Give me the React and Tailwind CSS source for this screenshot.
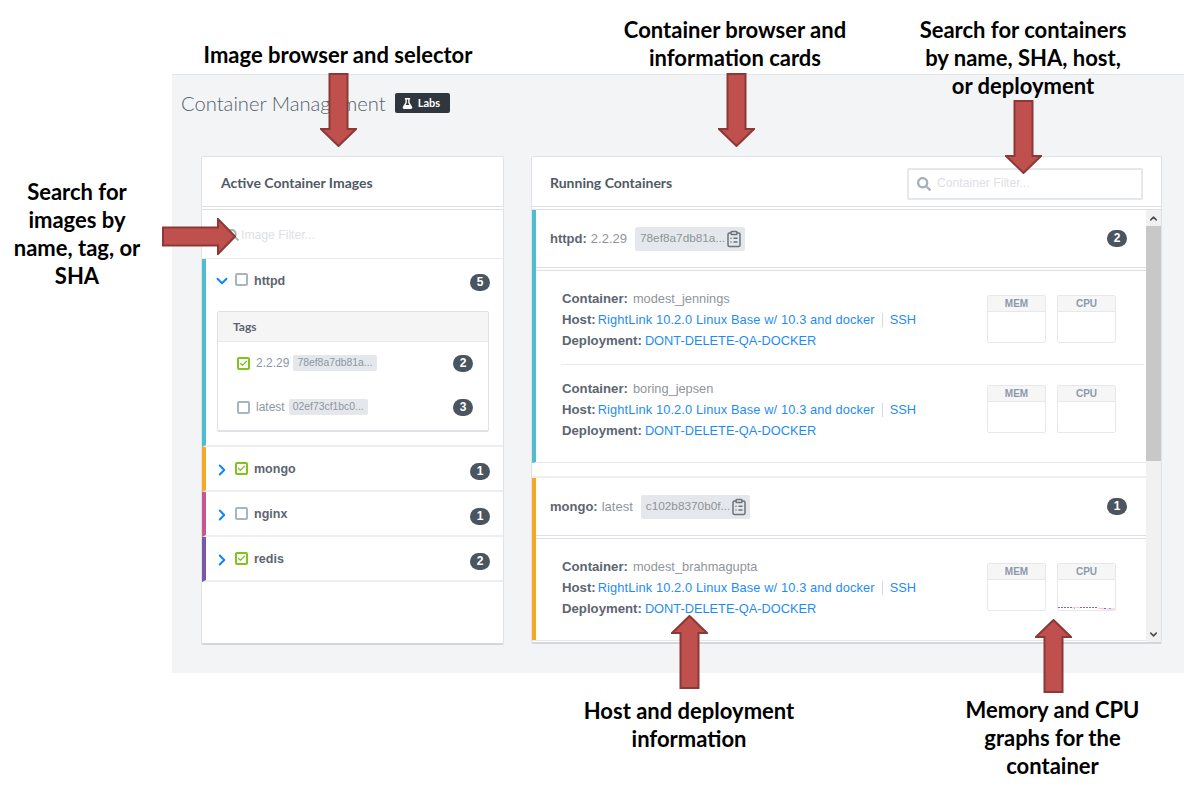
import React from "react";
import { ChevronDown, ChevronRight, ChevronUp, Check, ClipboardList } from "lucide-react";
import { FaFlask, FaSearch } from "react-icons/fa";

function Arrow({ dir, className, len }) {
  const head = 18;
  const w = 37;
  const sh = 9;
  const c = w / 2;
  const d =
    dir === "down"
      ? `M${c - sh} 1H${c + sh}V${len - head}H${w - 1}L${c} ${len - 1}L1 ${len - head}H${c - sh}Z`
      : dir === "up"
      ? `M${c - sh} ${len - 1}H${c + sh}V${head}H${w - 1}L${c} 1L1 ${head}H${c - sh}Z`
      : `M1 ${c - sh}H${len - head}V1L${len - 1} ${c}L${len - head} ${w - 1}V${c + sh}H1Z`;
  const vw = dir === "right" ? len : w;
  const vh = dir === "right" ? w : len;
  return (
    <svg className={className} width={vw} height={vh} viewBox={`0 0 ${vw} ${vh}`}>
      <path d={d} fill="#c0504d" stroke="#8c3836" strokeWidth="2" />
    </svg>
  );
}

function Note({ className, children }) {
  return (
    <div className={"absolute text-center font-bold text-black text-[22px] leading-[28px] font-['Lato',sans-serif] " + className}>
      {children}
    </div>
  );
}

function Badge({ n, className = "" }) {
  return (
    <span className={"w-[20px] h-[17px] rounded-full bg-[#4b5560] text-white text-[12px] font-bold leading-[17px] text-center shrink-0 " + className}>
      {n}
    </span>
  );
}

function Box({ on, className = "" }) {
  return (
    <span
      className={
        "w-[13px] h-[13px] rounded-[2px] border-2 shrink-0 flex items-center justify-center bg-white " +
        (on ? "border-[#80c31c] " : "border-[#a9b4c2] ") +
        className
      }
    >
      {on && <Check size={9} strokeWidth={3.5} className="text-[#80c31c]" />}
    </span>
  );
}

function ImageRow({ bar, name, on, n }) {
  return (
    <div className={"h-[45px] pt-[2px] border-b-2 border-[#eceef1] border-l-4 flex items-center pl-[7px] pr-[13px] " + bar}>
      <ChevronRight size={18} strokeWidth={2.5} className="text-[#0a84ff] shrink-0 mr-[4px]" />
      <Box on={on} className="-mt-[3px]" />
      <span className="ml-[6px] text-[12.5px] font-bold text-[#5d6570] flex-1">{name}</span>
      <Badge n={n} className="mt-[3px]" />
    </div>
  );
}

function TagRow({ label, sha, on, n, className }) {
  return (
    <div className={"flex items-center pl-[19px] pr-[15px] " + className}>
      <Box on={on} />
      <span className="ml-[6px] text-[12px] text-[#8d96a3]">{label}</span>
      <span className="ml-[4px] bg-[#e4e7eb] rounded-[2px] h-[16px] px-[4px] text-[10.4px] leading-[16px] text-[#8d96a3]">{sha}</span>
      <span className="flex-1" />
      <Badge n={n} />
    </div>
  );
}

function Graph({ label, spark }) {
  return (
    <div className="w-[59px] h-[48px] border border-[#e6e8eb] rounded-[2px] flex flex-col overflow-hidden">
      <div className="h-[16px] shrink-0 bg-[#f6f6f6] border-b border-[#e6e8eb] text-center text-[10px] leading-[15px] font-bold text-[#8d99aa]">{label}</div>
      <div className="flex-1 flex items-end">
        {spark && (
          <svg width="57" height="4" viewBox="0 0 57 4">
            <path d="M0 1.5H14M16 2H17M22 1.5H40M46 2.5H48M51 2.5H53" stroke="#6a6aee" strokeWidth="1" strokeDasharray="2 1" fill="none" />
            <path d="M14 2L18 1L22 2M40 2L46 3M48 3L57 3" stroke="#f2c0c8" strokeWidth="1" fill="none" />
          </svg>
        )}
      </div>
    </div>
  );
}

function Detail({ name, spark, className }) {
  return (
    <div className={"flex pl-[26px] pr-[30px] " + className}>
      <div className="flex-1 text-[12.8px] leading-[21px] text-[#5d6570]">
        <div>
          <b className="font-bold text-[13.2px]">Container:</b>
          <span className="text-[#8f959c] ml-[5px]">{name}</span>
        </div>
        <div className="flex items-center">
          <b className="font-bold text-[13.2px]">Host:</b>
          <span className="text-[#1f8cf5] ml-[2px] tracking-[0.13px]">RightLink 10.2.0 Linux Base w/ 10.3 and docker</span>
          <span className="ml-[7px] mr-[7px] h-[14px] border-l border-[#d5d9de]" />
          <span className="text-[#1f8cf5]">SSH</span>
        </div>
        <div>
          <b className="font-bold text-[13.2px]">Deployment:</b>
          <span className="text-[#1f8cf5] ml-[3px]">DONT-DELETE-QA-DOCKER</span>
        </div>
      </div>
      <div className="flex gap-[11px] mt-[7px]">
        <Graph label="MEM" />
        <Graph label="CPU" spark={spark} />
      </div>
    </div>
  );
}

function RunHead({ name, tag, sha, n }) {
  return (
    <div className="h-[61px] border-b-[4px] border-double border-[#dcdfe3] flex items-center pl-[14px] pr-[19px] text-[13px]">
      <b className="font-bold text-[#5d6570]">{name}:</b>
      <span className="ml-[4px] text-[#8f959c]">{tag}</span>
      <span className="ml-[8px] h-[24px] bg-[#e4e7eb] rounded-[2px] pl-[5px] pr-[2px] flex items-center text-[#8f959c] text-[11.8px]">
        {sha}
        <ClipboardList size={18} strokeWidth={2} className="text-[#6b737d]" />
      </span>
      <span className="flex-1" />
      <Badge n={n} />
    </div>
  );
}

export default function App() {
  return (
    <div className="relative w-[1189px] h-[788px] bg-white overflow-hidden font-['Liberation_Sans',sans-serif]">
      <div className="pt-[74px]">
        <div className="ml-[172px] mr-[5px] h-[599px] bg-[#f3f4f6] border-t border-[#e3e5e8]">
          <div className="h-[81px] pl-[9px] pt-[16px] flex items-start">
            <h1 className="font-['Lato',sans-serif] font-light text-[20.2px] leading-[24px] text-[#56616e]">Container Management</h1>
            <span className="ml-[9px] mt-[2px] w-[55px] h-[20px] pl-[7px] rounded-[2px] bg-[#30363d] text-white text-[11px] font-bold flex items-center gap-[5px] font-['Lato',sans-serif]">
              <FaFlask size={11} />
              Labs
            </span>
          </div>
          <div className="flex items-start pl-[29px]">
            <section className="w-[303px] h-[489px] bg-white border border-[#dfe2e6] border-b-2 border-b-[#d3d6da] rounded-[2px] flex flex-col">
              <div className="h-[53px] shrink-0 pt-[2px] border-b-[4px] border-double border-[#dcdfe3] flex items-center pl-[19px] font-['Lato',sans-serif] font-bold text-[14px] text-[#4f5965]">
                Active Container Images
              </div>
              <div className="h-[49px] shrink-0 pt-[2px] border-b border-[#e8eaed] flex items-center pl-[25px] text-[12.2px] text-[#dde0e4]">
                <FaSearch size={12} className="text-[#a5b0bc] mr-[2px]" />
                Image Filter...
              </div>
              <div className="h-[188px] shrink-0 border-b-2 border-[#eceef1] border-l-4 border-l-[#4fbcd0] pl-[7px] pr-[13px] pt-[14px]">
                <div className="flex items-center h-[16px]">
                  <ChevronDown size={18} strokeWidth={2.5} className="text-[#0a84ff] shrink-0 mr-[4px]" />
                  <Box className="-mt-[3px]" />
                  <span className="ml-[6px] text-[12.5px] font-bold text-[#5d6570] flex-1">httpd</span>
                  <Badge n={5} className="mt-[3px]" />
                </div>
                <div className="mr-[1px] ml-[4px] mt-[22px] h-[121px] border border-[#dfe2e6] border-b-2 rounded-[2px]">
                  <div className="h-[30px] bg-[#f5f5f5] border-b border-[#e6e8eb] pl-[15px] flex items-center font-['Lato',sans-serif] font-bold text-[12px] text-[#5d6570]">
                    Tags
                  </div>
                  <TagRow className="mt-[12px]" label="2.2.29" sha="78ef8a7db81a..." on n={2} />
                  <TagRow className="mt-[26px]" label="latest" sha="02ef73cf1bc0..." n={3} />
                </div>
              </div>
              <ImageRow bar="border-l-[#f9a825]" name="mongo" on n={1} />
              <ImageRow bar="border-l-[#c9568c]" name="nginx" n={1} />
              <ImageRow bar="border-l-[#7a55ad]" name="redis" on n={2} />
            </section>
            <section className="ml-[27px] w-[631px] h-[488px] bg-white border border-[#dfe2e6] border-b-2 border-b-[#d3d6da] rounded-[2px] flex flex-col overflow-hidden">
              <div className="h-[53px] shrink-0 border-b-[4px] border-double border-[#dcdfe3] flex items-center pl-[18px] pr-[18px] justify-between">
                <span className="mt-[2px] font-['Lato',sans-serif] font-bold text-[14px] text-[#4f5965]">Running Containers</span>
                <div className="mt-[4px] w-[236px] h-[32px] border-2 border-[#e4e7eb] rounded-[2px] flex items-center pl-[8px] text-[12.2px] text-[#dde0e4]">
                  <FaSearch size={14} className="text-[#a5b0bc] mr-[6px]" />
                  Container Filter...
                </div>
              </div>
              <div className="flex flex-1 min-h-0">
                <div className="flex-1 min-w-0 overflow-hidden">
                  <div className="h-[431px] border-b border-[#e6e8eb] overflow-hidden">
                    <div className="h-[253px] border-l-4 border-l-[#4fbcd0] border-b border-b-[#e6e8eb]">
                      <RunHead name="httpd" tag="2.2.29" sha="78ef8a7db81a..." n={2} />
                      <Detail className="mt-[17px]" name="modest_jennings" />
                      <div className="ml-[25px] mr-[2px] border-t border-[#e6e8eb] mt-[13px]" />
                      <Detail className="mt-[13px]" name="boring_jepsen" />
                    </div>
                    <div className="h-[15px] border-b-2 border-[#eef0f2]" />
                    <div className="h-[163px] border-l-4 border-l-[#f9a825]">
                      <RunHead name="mongo" tag="latest" sha="c102b8370b0f..." n={1} />
                      <Detail className="mt-[17px]" name="modest_brahmagupta" spark />
                    </div>
                  </div>
                </div>
                <div className="w-[15px] shrink-0 flex flex-col bg-[#f1f1f1]">
                  <div className="h-[16px] flex items-center justify-center"><ChevronUp size={11} strokeWidth={3.5} className="text-[#505050]" /></div>
                  <div className="h-[235px] bg-[#c8c8c8]" />
                  <div className="flex-1" />
                  <div className="h-[16px] flex items-center justify-center"><ChevronDown size={11} strokeWidth={3.5} className="text-[#505050]" /></div>
                </div>
              </div>
            </section>
          </div>
        </div>
      </div>

      <Arrow dir="down" len={74} className="absolute left-[320px] top-[73px]" />
      <Arrow dir="down" len={74} className="absolute left-[718px] top-[73px]" />
      <Arrow dir="down" len={74} className="absolute left-[1005px] top-[100px]" />
      <Arrow dir="right" len={74} className="absolute left-[162px] top-[218px]" />
      <Arrow dir="up" len={74} className="absolute left-[671px] top-[615px]" />
      <Arrow dir="up" len={74} className="absolute left-[1035px] top-[619px]" />

      <Note className="left-[172px] top-[41px] w-[332px]">Image browser and selector</Note>
      <Note className="left-[585px] top-[16px] w-[300px]">Container browser and<br />information cards</Note>
      <Note className="left-[883px] top-[16px] w-[280px]">Search for containers<br />by name, SHA, host,<br />or deployment</Note>
      <Note className="left-[0px] top-[178px] w-[154px]">Search for<br />images by<br />name, tag, or<br />SHA</Note>
      <Note className="left-[540px] top-[697px] w-[298px]">Host and deployment<br />information</Note>
      <Note className="left-[930px] top-[696px] w-[245px]">Memory and CPU<br />graphs for the<br />container</Note>
    </div>
  );
}
